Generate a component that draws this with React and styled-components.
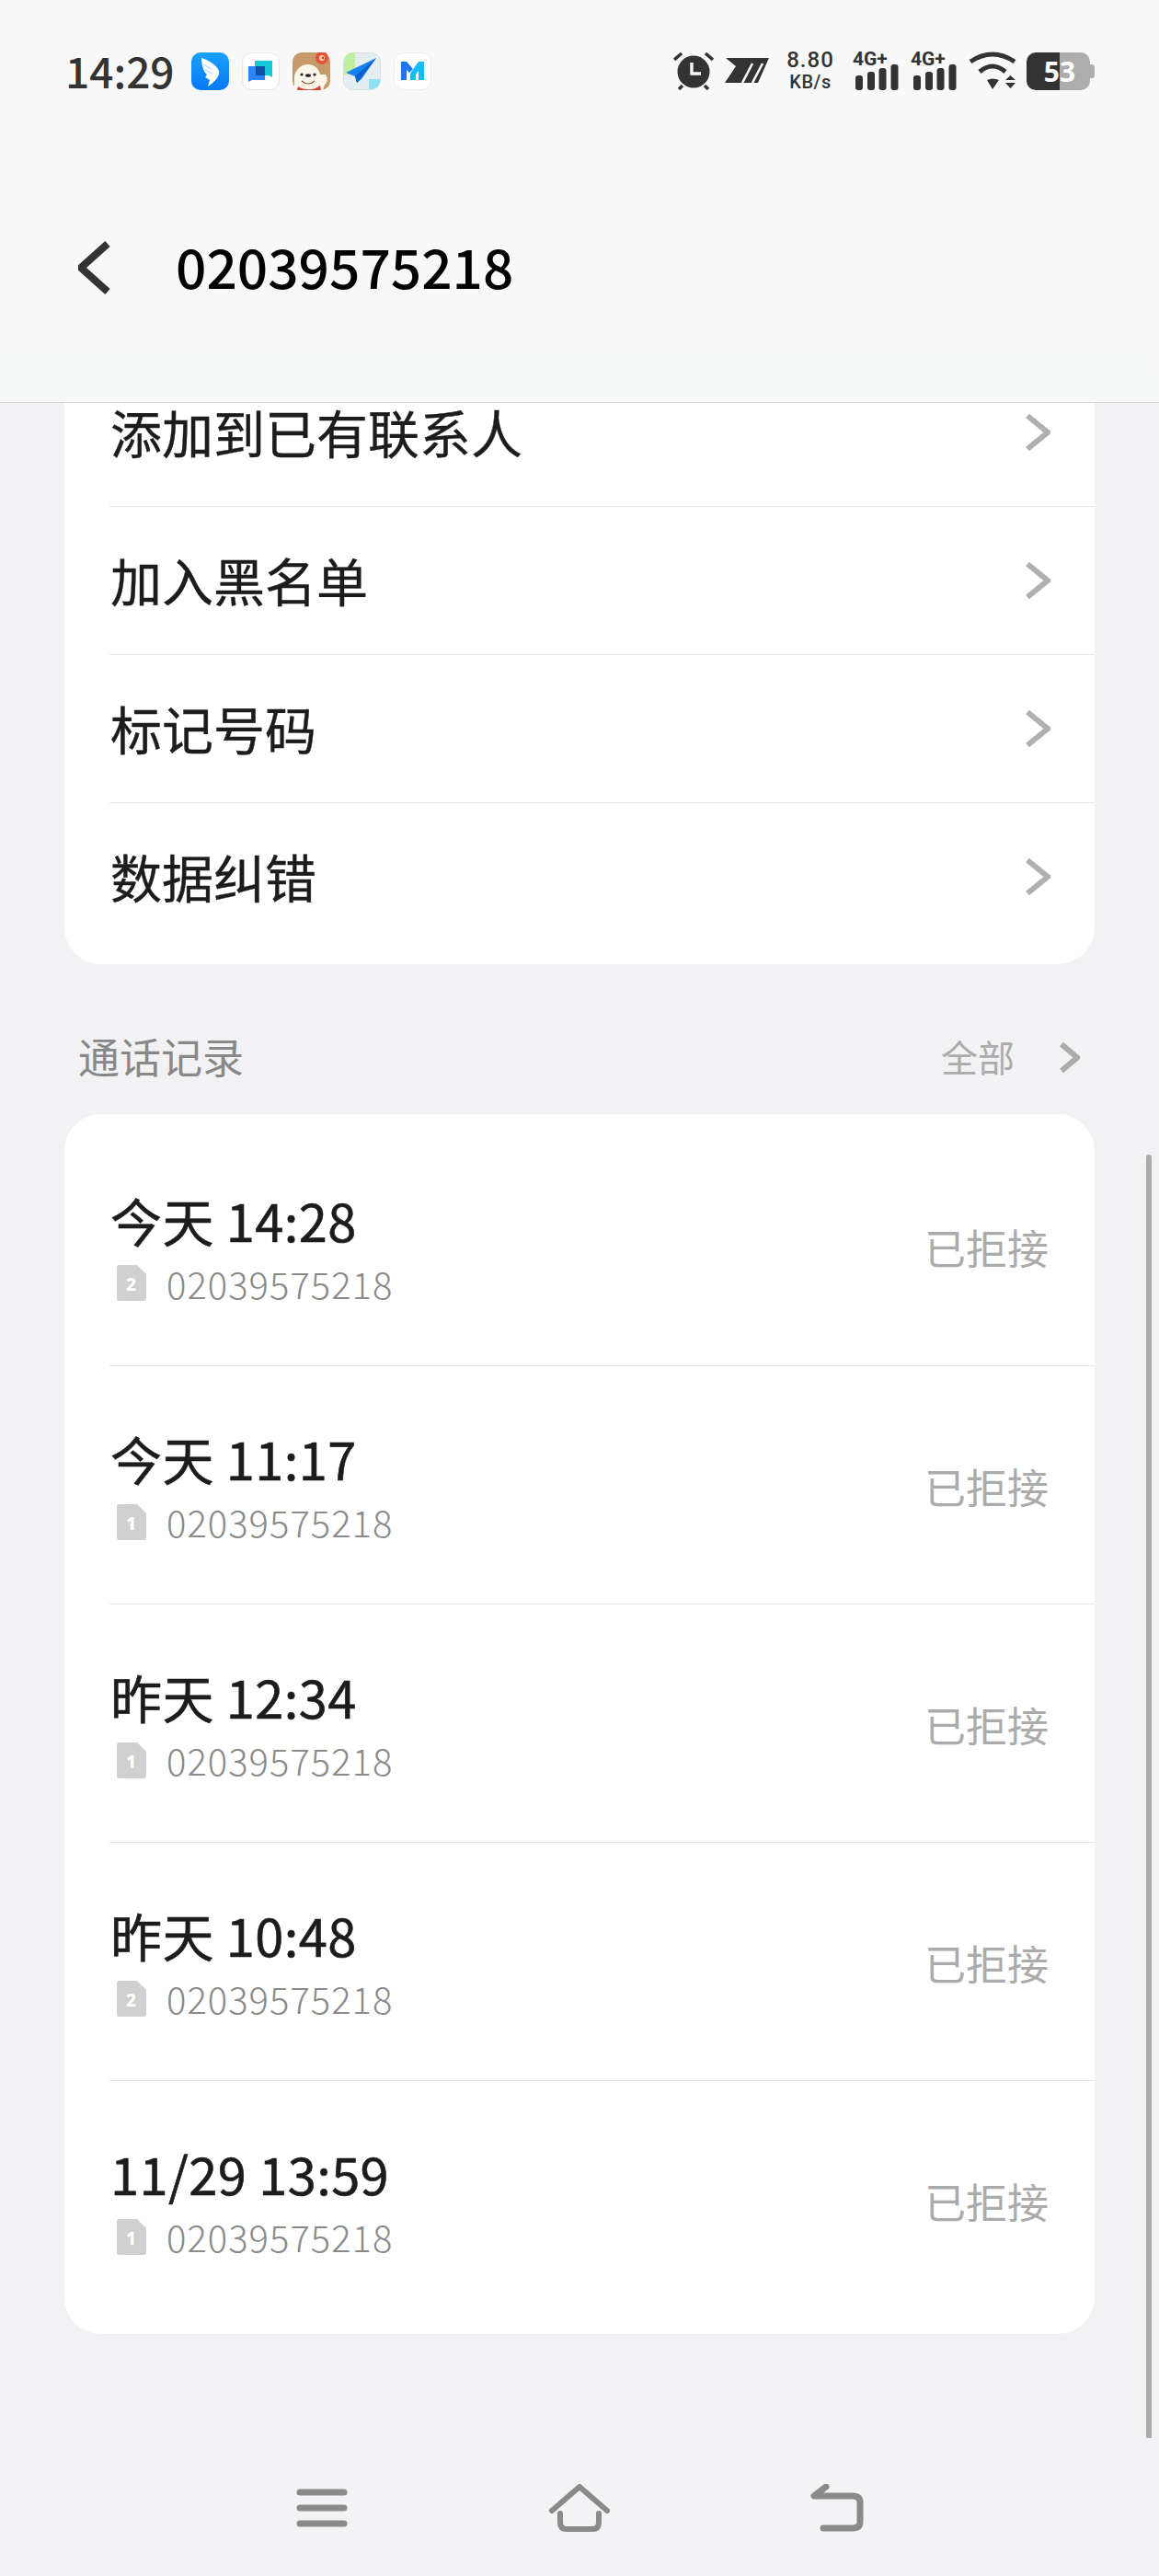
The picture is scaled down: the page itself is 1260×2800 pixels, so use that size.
import React from 'react';
import styled, { createGlobalStyle } from 'styled-components';

const SANS = '"Noto Sans CJK SC", "Noto Sans", sans-serif';

const GlobalStyle = createGlobalStyle`
  html, body {
    margin: 0;
    padding: 0;
    background: #f2f2f4;
    font-family: ${SANS};
  }
  * { box-sizing: border-box; }
`;

const ACTIONS = ['添加到已有联系人', '加入黑名单', '标记号码', '数据纠错'];

const CALLS = [
  { time: '今天 14:28', sim: 2 },
  { time: '今天 11:17', sim: 1 },
  { time: '昨天 12:34', sim: 1 },
  { time: '昨天 10:48', sim: 2 },
  { time: '11/29 13:59', sim: 1 },
];

const NUMBER = '02039575218';

// Status bar drawings
const DingIcon = () => (
  <svg width="41" height="41" viewBox="0 0 41 41">
    <defs>
      <linearGradient id="ding" x1="0" y1="0" x2="0" y2="1">
        <stop offset="0" stopColor="#1ba0ff" />
        <stop offset="1" stopColor="#0779f5" />
      </linearGradient>
    </defs>
    <rect width="41" height="41" rx="10" fill="url(#ding)" />
    <path d="M11 6 C18 8 27 13 30 20 C31 25 27 31 18 37 L20 30 L15 27 L17 24 C13 21 11 13 11 6 Z" fill="#fff" />
    <path d="M13 13 L22 18 M15 19 L23 23" stroke="#8fd0ff" strokeWidth="1" />
  </svg>
);

const ChatIcon = () => (
  <svg width="41" height="41" viewBox="0 0 41 41">
    <rect x="0.5" y="0.5" width="40" height="40" rx="10" fill="#fff" stroke="#e6e6e6" />
    <path d="M14 9 H33 V27 L29 25 H14 Z" fill="#14c8d8" />
    <path d="M7 15 H25 V30 H11 L7 32 Z" fill="#2a86f5" />
    <rect x="15" y="15" width="10" height="10" fill="#0d4fa8" />
  </svg>
);

const DogIcon = () => (
  <svg width="41" height="41" viewBox="0 0 41 41">
    <rect width="41" height="41" rx="10" fill="#c79a6b" />
    <circle cx="32" cy="6" r="7" fill="#e2553a" />
    <circle cx="32" cy="6" r="3" fill="#f6d9b0" />
    <circle cx="33" cy="6" r="1.4" fill="#d83a24" />
    <path d="M2 41 V26 C4 17 10 13 17 13 C25 13 29 19 30 24 L36 24 C39 28 38 33 35 35 L33 41 Z" fill="#fbf5ea" />
    <path d="M6 37 C14 42 24 41 30 36 L31 41 H5 Z" fill="#d4452e" />
    <circle cx="10" cy="24" r="1.6" fill="#222" />
    <circle cx="24" cy="24" r="1.6" fill="#222" />
    <ellipse cx="17" cy="25" rx="3" ry="1.8" fill="#222" />
    <path d="M10 31 C14 35 20 35 24 31" stroke="#8a5b3a" strokeWidth="1.2" fill="none" />
  </svg>
);

const MapIcon = () => (
  <svg width="41" height="41" viewBox="0 0 41 41">
    <rect x="0.5" y="0.5" width="40" height="40" rx="10" fill="#e4eef0" stroke="#d8dfe0" />
    <path d="M1 10 a10 10 0 0 1 10 -10 H13 V24 H1 Z" fill="#bdf0a0" />
    <path d="M28 29 H40 V31 a9 9 0 0 1 -9 9 H28 Z" fill="#8ee0f5" />
    <path d="M36 6 L3 22 L13 26 L15 33 L20 29 Z" fill="#1780f0" />
    <path d="M36 6 L13 26 L15 33 Z" fill="#0c5fc8" />
  </svg>
);

const MailIcon = () => (
  <svg width="41" height="41" viewBox="0 0 41 41">
    <rect x="0.5" y="0.5" width="40" height="40" rx="10" fill="#fff" stroke="#ececec" />
    <path d="M8 30 V10 H14 L21 18 L17 22 L14 19 V30 Z" fill="#1f77ee" />
    <path d="M33 10 V30 H27 V20 L24 24 V30 H18 V23 L27 10 Z" fill="#15bdf5" />
  </svg>
);

const AlarmIcon = () => (
  <svg width="44" height="41" viewBox="0 0 44 41">
    <circle cx="22" cy="21" r="17.5" fill="#333" />
    <path d="M1 8 L9 1 M43 8 L35 1" stroke="#333" strokeWidth="3.5" />
    <path d="M10 36 L6 40 M34 36 L38 40" stroke="#333" strokeWidth="3.5" />
    <path d="M20 11 V23 H30" stroke="#f8f8f8" strokeWidth="3.4" fill="none" />
  </svg>
);

const SwooshIcon = () => (
  <svg width="49" height="28" viewBox="0 0 49 28">
    <path d="M1 0 H48 L36 27 H0 L12 9 Z" fill="#333" />
    <path d="M19 27 L30 6 M30 27 L41 6" stroke="#f8f8f8" strokeWidth="2.6" />
  </svg>
);

const SignalIcon = () => (
  <Signal>
    <svg width="50" height="41" viewBox="0 0 50 41">
      <rect x="3" y="25" width="8" height="16" rx="3" fill="#333" />
      <rect x="16" y="21" width="8" height="20" rx="3" fill="#333" />
      <rect x="28.5" y="17" width="8" height="24" rx="3" fill="#333" />
      <rect x="41.5" y="13" width="8" height="28" rx="3" fill="#333" />
    </svg>
    <SignalLabel>4G+</SignalLabel>
  </Signal>
);

const WifiIcon = () => (
  <svg width="54" height="42" viewBox="0 0 54 42">
    <path d="M2 11 Q26 -5 50 11" stroke="#333" strokeWidth="5" fill="none" />
    <path d="M12 22 Q26 10 40 22" stroke="#333" strokeWidth="5" fill="none" />
    <path d="M20 31 Q26 28 33 31 L26 41 Z" fill="#333" />
    <path d="M40 31 H51 L45.5 26 Z M40 34 H51 L45.5 40 Z" fill="#333" />
  </svg>
);

// Chevron, drawn for back and list arrows
const Chevron = ({ width, height, stroke, color, left }) => (
  <svg width={width} height={height} viewBox={`0 0 ${width} ${height}`}>
    <path
      d={
        left
          ? `M${width - 3} 3 L3 ${height / 2} L${width - 3} ${height - 3}`
          : `M3 3 L${width - 3} ${height / 2} L3 ${height - 3}`
      }
      stroke={color}
      strokeWidth={stroke}
      fill="none"
    />
  </svg>
);

const SimIcon = ({ n }) => (
  <svg width="32" height="39" viewBox="0 0 32 39">
    <path d="M3 0 H22 L32 10 V36 a3 3 0 0 1 -3 3 H3 a3 3 0 0 1 -3 -3 V3 a3 3 0 0 1 3 -3 Z" fill="#d0d0d0" />
    <text x="16" y="28" textAnchor="middle" fontFamily={'"Noto Sans", sans-serif'} fontWeight="800" fontSize="19" fill="#fff">{n}</text>
  </svg>
);

const App = () => (
  <Page>
    <GlobalStyle />
    <Header>
      <StatusBar>
        <Clock>14:29</Clock>
        <AppIcons>
          <DingIcon />
          <ChatIcon />
          <DogIcon />
          <MapIcon />
          <MailIcon />
        </AppIcons>
        <StatusRight>
          <AlarmIcon />
          <SwooshIcon />
          <Speed>
            <SpeedValue>8.80</SpeedValue>
            <SpeedUnit>KB/s</SpeedUnit>
          </Speed>
          <SignalIcon />
          <SignalIcon />
          <WifiIcon />
          <Battery>
            <BatteryFill />
            <BatteryRest />
            <BatteryNub />
            <BatteryLabel>53</BatteryLabel>
          </Battery>
        </StatusRight>
      </StatusBar>
      <TitleBar>
        <Chevron left width={35} height={58} stroke={8} color="#333" />
        <Title>{NUMBER}</Title>
      </TitleBar>
    </Header>

    <Main>
      <ActionCard>
        {ACTIONS.map((label) => (
          <ActionRow key={label}>
            <ActionLabel>{label}</ActionLabel>
            <Chevron width={28} height={42} stroke={6} color="#b0b0b0" />
          </ActionRow>
        ))}
      </ActionCard>

      <SectionHeader>
        <SectionTitle>通话记录</SectionTitle>
        <SeeAll>
          <span>全部</span>
          <Chevron width={23} height={35} stroke={6} color="#ababab" />
        </SeeAll>
      </SectionHeader>

      <CallCard>
        {CALLS.map((call) => (
          <CallRow key={call.time}>
            <CallInfo>
              <CallTime>{call.time}</CallTime>
              <CallNumber>
                <SimIcon n={call.sim} />
                <span>{NUMBER}</span>
              </CallNumber>
            </CallInfo>
            <CallStatus>已拒接</CallStatus>
          </CallRow>
        ))}
      </CallCard>

      <Scrollbar />
    </Main>

    <NavBar>
      <NavSlot>
        <svg width="56" height="42" viewBox="0 0 56 42">
          <path d="M4 4 H52 M4 21 H52 M4 38 H52" stroke="#8a8a8a" strokeWidth="7" strokeLinecap="round" />
        </svg>
      </NavSlot>
      <NavSlot>
        <svg width="68" height="52" viewBox="0 0 68 52">
          <path d="M4 29 L34 3 L64 29" stroke="#8a8a8a" strokeWidth="6" strokeLinecap="round" strokeLinejoin="round" fill="none" />
          <path d="M13 32 V42 Q13 49 20 49 H48 Q55 49 55 42 V32" stroke="#8a8a8a" strokeWidth="6" strokeLinecap="round" fill="none" />
        </svg>
      </NavSlot>
      <NavSlot>
        <svg width="58" height="52" viewBox="0 0 58 52">
          <path d="M17 3 L4 13 H46 Q54 13 54 20 V41 Q54 48 46 48 H14" stroke="#8a8a8a" strokeWidth="7" strokeLinecap="round" strokeLinejoin="round" fill="none" />
        </svg>
      </NavSlot>
    </NavBar>
  </Page>
);

export default App;

const Page = styled.div`
  width: 1260px;
  height: 2800px;
  display: flex;
  flex-direction: column;
  overflow: hidden;
  background: #f2f2f4;
`;

const Header = styled.header`
  height: 438px;
  flex: none;
  background: linear-gradient(180deg, #f8f8f8 0%, #f7f8f8 100%);
  border-bottom: 1px solid #d9d9d9;
`;

const StatusBar = styled.div`
  height: 154px;
  padding: 0 70px 0 71px;
  display: flex;
  align-items: center;
`;

const Clock = styled.div`
  margin-bottom: 2px;
  font-size: 46px;
  font-weight: 500;
  color: #333;
  line-height: 1;
`;

const AppIcons = styled.div`
  margin-left: 18px;
  display: flex;
  gap: 14px;
  align-items: center;
  svg { display: block; }
`;

const StatusRight = styled.div`
  margin-left: auto;
  display: flex;
  align-items: center;
  gap: 13px;
  svg { display: block; }
  > svg:first-child { margin-right: -1px; }
`;

const Speed = styled.div`
  width: 54px;
  margin: 0 6px 0 4px;
  display: flex;
  flex-direction: column;
  align-items: center;
  color: #333;
  font-family: Roboto, sans-serif;
`;

const SpeedValue = styled.div`
  font-size: 24px;
  font-weight: 500;
  line-height: 24px;
  letter-spacing: 1px;
`;

const SpeedUnit = styled.div`
  font-size: 20px;
  font-weight: 500;
  line-height: 24px;
  letter-spacing: 0.5px;
`;

const Signal = styled.div`
  position: relative;
  width: 50px;
  height: 41px;
`;

const SignalLabel = styled.div`
  position: absolute;
  left: 0;
  top: -2px;
  font-family: Roboto, sans-serif;
  font-size: 21px;
  font-weight: 700;
  line-height: 18px;
  color: #333;
`;

const Battery = styled.div`
  position: relative;
  width: 74px;
  height: 41px;
  margin-left: -4px;
  display: flex;
  align-items: center;
`;

const BatteryFill = styled.div`
  width: 36px;
  height: 41px;
  background: #333;
  border-radius: 10px 0 0 10px;
`;

const BatteryRest = styled.div`
  width: 33px;
  height: 41px;
  background: #adadad;
  border-radius: 0 10px 10px 0;
`;

const BatteryNub = styled.div`
  width: 5px;
  height: 15px;
  background: #adadad;
  border-radius: 0 3px 3px 0;
`;

const BatteryLabel = styled.div`
  position: absolute;
  left: 16px;
  top: 0;
  width: 40px;
  text-align: center;
  font-family: "Noto Sans", sans-serif;
  font-size: 30px;
  font-weight: 700;
  line-height: 41px;
  color: #fff;
`;

const TitleBar = styled.div`
  height: 274px;
  padding-left: 85px;
  display: flex;
  align-items: center;
  gap: 71px;
  svg { display: block; }
`;

const Title = styled.h1`
  margin: 0 0 4px;
  font-size: 58.6px;
  font-weight: 500;
  line-height: 1;
  color: #000;
`;

const Main = styled.main`
  position: relative;
  flex: 1;
  min-height: 0;
  overflow: hidden;
  padding: 0 70px;
`;

const ActionCard = styled.section`
  margin-top: -49px;
  padding-bottom: 15px;
  background: #fff;
  border-radius: 0 0 40px 40px;
`;

const ActionRow = styled.div`
  height: 161px;
  margin-left: 49px;
  padding: 0 48px 0 1px;
  display: flex;
  align-items: center;
  justify-content: space-between;
  svg { display: block; }
  & + & { border-top: 1px solid #e4e4e4; }
`;

const ActionLabel = styled.span`
  margin-bottom: 2px;
  font-size: 56px;
  line-height: 1;
  color: #1c1c1c;
  -webkit-text-stroke: 0.4px #1c1c1c;
`;

const SectionHeader = styled.div`
  height: 163px;
  padding: 36px 16px 0 15px;
  display: flex;
  align-items: center;
  justify-content: space-between;
`;

const SectionTitle = styled.h2`
  margin: 0;
  font-size: 45px;
  font-weight: 400;
  line-height: 1.2;
  color: #888;
`;

const SeeAll = styled.div`
  display: flex;
  align-items: center;
  gap: 48px;
  font-size: 40px;
  line-height: 1.2;
  color: #ababab;
  svg { display: block; margin-top: 4px; }
`;

const CallCard = styled.section`
  padding: 14px 0 17px;
  background: #fff;
  border-radius: 40px;
`;

const CallRow = styled.div`
  height: 259px;
  margin-left: 49px;
  padding: 0 50px 0 1px;
  display: flex;
  align-items: center;
  justify-content: space-between;
  & + & { border-top: 1px solid #e4e4e4; }
`;

const CallInfo = styled.div`
  margin-top: 4px;
`;

const CallTime = styled.div`
  font-size: 56px;
  line-height: 68px;
  letter-spacing: 0.4px;
  color: #1c1c1c;
  -webkit-text-stroke: 0.6px #1c1c1c;
`;

const CallNumber = styled.div`
  margin-top: 8px;
  padding-left: 7px;
  display: flex;
  align-items: center;
  gap: 22px;
  font-size: 40px;
  line-height: 54px;
  font-weight: 300;
  letter-spacing: 1px;
  color: #8a8a8a;
  svg { display: block; }
`;

const CallStatus = styled.div`
  margin-top: 2px;
  font-size: 45px;
  color: #ababab;
`;

const Scrollbar = styled.div`
  position: absolute;
  top: 817px;
  right: 8px;
  width: 6px;
  height: 1396px;
  border-radius: 3px;
  background: #ababab;
`;

const NavBar = styled.nav`
  height: 150px;
  flex: none;
  padding-top: 1px;
  display: flex;
  align-items: center;
  justify-content: center;
  background: #f3f3f5;
`;

const NavSlot = styled.div`
  width: 280px;
  display: flex;
  justify-content: center;
  svg { display: block; }
`;
